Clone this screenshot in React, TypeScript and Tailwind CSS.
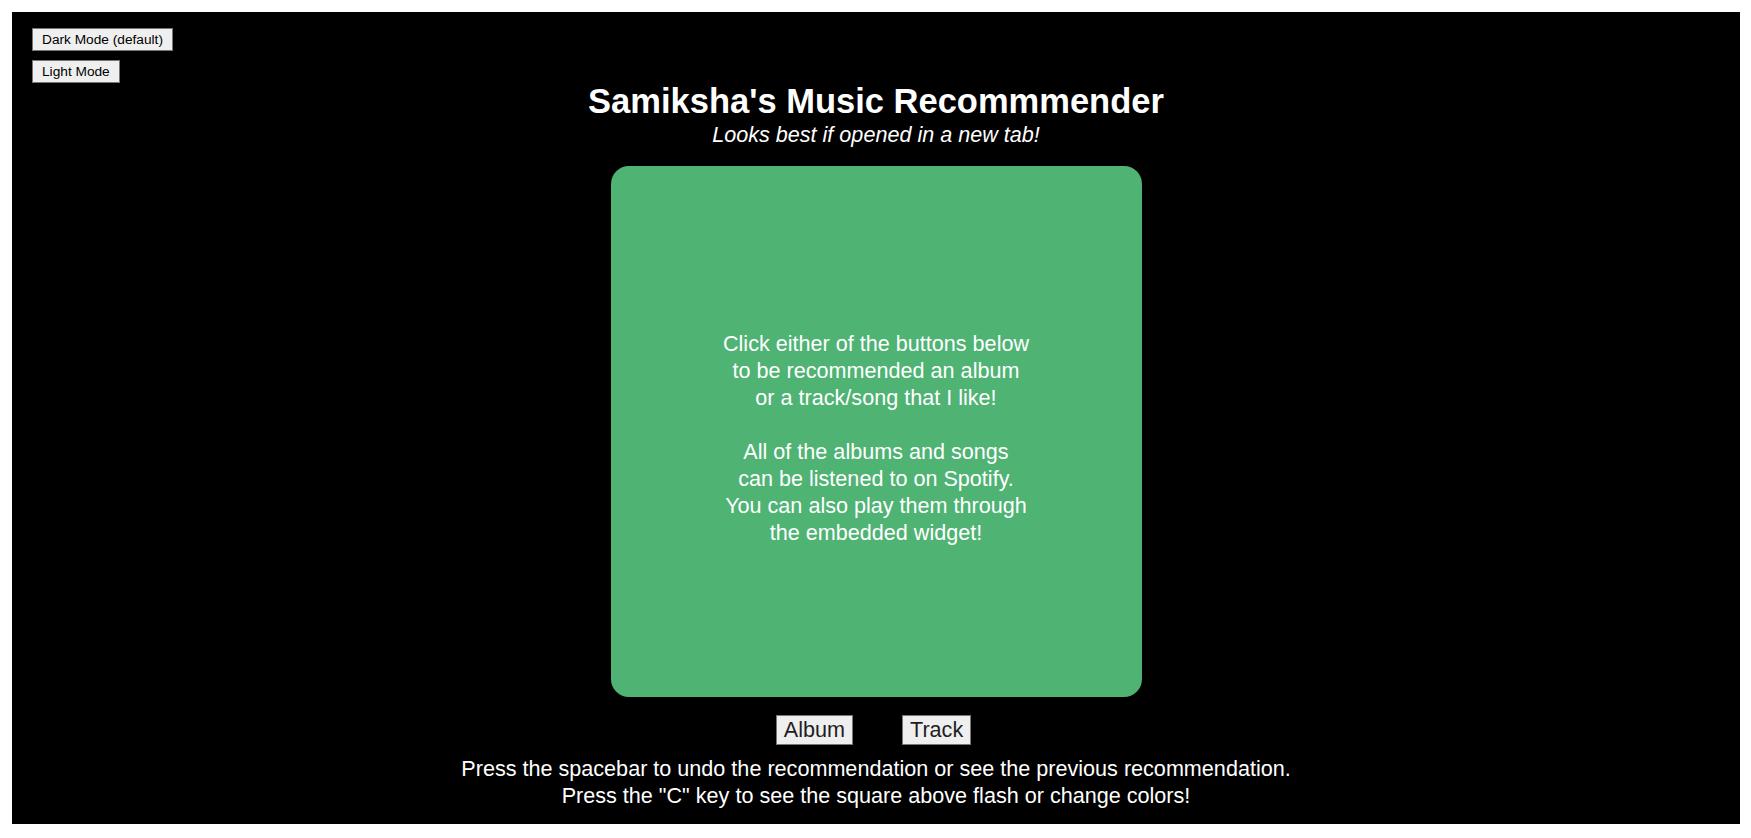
import React, { useState } from 'react';

const App = () => {
  const [mode, setMode] = useState<'dark' | 'light'>('dark');

  return (
    <div className="min-h-screen bg-white pt-[12px] pl-[12px] font-['Liberation_Sans',Arial,sans-serif]">
      <div className="flex h-[812px] w-[1728px] flex-col bg-black text-white">
        {/* mode switches */}
        <div className="flex flex-col items-start gap-[9px] pt-[16px] pl-[20px]">
          <button
            onClick={() => setMode('dark')}
            className="h-[23px] border border-[#767676] bg-[#efefef] px-[9px] text-[13.7px] leading-[16px] text-black"
          >
            Dark Mode (default)
          </button>
          <button
            onClick={() => setMode('light')}
            className="h-[23px] border border-[#767676] bg-[#efefef] px-[9px] text-[13.7px] leading-[16px] text-black"
          >
            Light Mode
          </button>
        </div>

        <h1 className="text-center text-[34.5px] font-bold leading-[36px]">Samiksha's Music Recommmender</h1>
        <p className="mt-[3px] text-center text-[21.6px] italic leading-[25px]">Looks best if opened in a new tab!</p>

        <div className="mt-[19px] flex justify-center">
          <div className="flex h-[531px] w-[531px] items-center justify-center rounded-[18px] bg-[#4fb374] pt-[13px]">
            <p className="text-center text-[21.6px] leading-[27px] text-white">
              Click either of the buttons below
              <br />
              to be recommended an album
              <br />
              or a track/song that I like!
              <br />
              <br />
              All of the albums and songs
              <br />
              can be listened to on Spotify.
              <br />
              You can also play them through
              <br />
              the embedded widget!
            </p>
          </div>
        </div>

        <div className="mt-[18px] flex justify-center gap-[49px] pr-[5px]">
          <button className="h-[30px] border border-[#767676] bg-[#efefef] px-[7px] text-[21.6px] leading-[24px] text-[#1e1e1e]">
            Album
          </button>
          <button className="h-[30px] border border-[#767676] bg-[#efefef] px-[7px] text-[21.6px] leading-[24px] text-[#1e1e1e]">
            Track
          </button>
        </div>

        <div className="mt-[10px] text-center text-[21.6px] leading-[27px]">
          <p>Press the spacebar to undo the recommendation or see the previous recommendation.</p>
          <p>Press the "C" key to see the square above flash or change colors!</p>
        </div>
        <span className="hidden">{mode}</span>
      </div>
    </div>
  );
};

export default App;
